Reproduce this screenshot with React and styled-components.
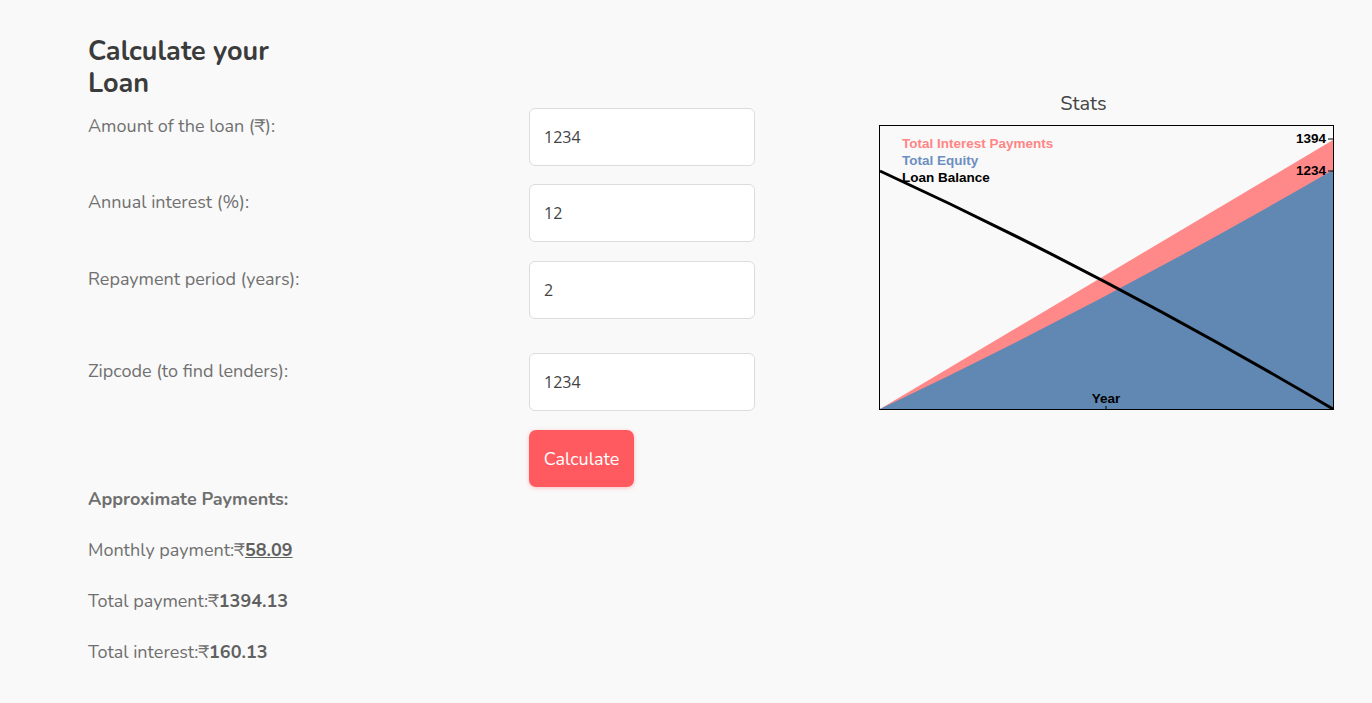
import styled, { createGlobalStyle } from "styled-components";

const GlobalStyle = createGlobalStyle`
  body {
    margin: 0;
    background: #f9f9f9;
    font-family: "Nunito", Lato, "Noto Sans", sans-serif;
  }
`;

const Page = styled.div`
  display: flex;
  align-items: flex-start;
  padding: 36px 0 0 88px;
  min-height: 667px;
`;

const Form = styled.div`
  width: 667px;
`;

const Heading = styled.h1`
  width: 220px;
  margin: 0 0 8px;
  font-size: 27px;
  line-height: 32px;
  font-weight: 700;
  color: #3b3b3b;
`;

const Row = styled.div`
  display: grid;
  grid-template-columns: 441px 226px;
  margin-bottom: ${(props) => props.gap || 0}px;
`;

const Label = styled.label`
  padding-top: 6px;
  font-size: 18px;
  line-height: 24px;
  color: #707070;
`;

const Input = styled.input`
  box-sizing: border-box;
  width: 226px;
  height: 58px;
  padding: 0 14px;
  border: 1px solid #dcdcdc;
  border-radius: 6px;
  background: #fff;
  font-family: "Open Sans", "Noto Sans", sans-serif;
  font-size: 16px;
  color: #444;
  outline: none;
`;

const Button = styled.button`
  display: block;
  width: 105px;
  height: 57px;
  border: none;
  border-radius: 7px;
  background: #ff5a5f;
  color: #fff;
  font-family: inherit;
  font-size: 18px;
  box-shadow: 0 1px 4px rgba(255, 90, 95, 0.35);
  cursor: pointer;
`;

const Results = styled.div`
  margin-top: 0;
  color: #6f6f6f;
  font-size: 18px;
  line-height: 24px;
`;

const ResultLine = styled.p`
  margin: 0 0 27px;
  font-weight: ${(props) => (props.bold ? 700 : 400)};
`;

const Value = styled.b`
  color: #606060;
  text-decoration: ${(props) => (props.underline ? "underline" : "none")};
`;

const ChartPanel = styled.div`
  margin: 55px 0 0 124px;
  width: 455px;
`;

const ChartTitle = styled.div`
  padding-right: 46px;
  text-align: center;
  font-size: 20px;
  line-height: 26px;
  color: #444;
  margin-bottom: 8px;
`;

const ChartSvg = styled.svg`
  display: block;
  font-family: "Liberation Sans", Arial, sans-serif;
  font-weight: 700;
  font-size: 13.5px;
`;

function Chart() {
  return (
    <ChartSvg width="455" height="285" viewBox="0 0 455 285">
      <polygon points="1,284 454,15 454,284" fill="#ff8888" />
      <path d="M1,284 Q230,175 454,45 L454,284 Z" fill="#6088b2" />
      <path
        d="M1,46 Q227,150 454,284"
        fill="none"
        stroke="#000"
        strokeWidth="3"
      />
      <text x="23" y="23" fill="#ff8585">Total Interest Payments</text>
      <text x="23" y="40" fill="#6c8fc0">Total Equity</text>
      <text x="23" y="57" fill="#000">Loan Balance</text>
      <text x="447" y="18" fill="#000" textAnchor="end">1394</text>
      <line x1="449" y1="14" x2="454" y2="14" stroke="#000" strokeWidth="1" />
      <text x="447" y="50" fill="#000" textAnchor="end">1234</text>
      <line x1="449" y1="46" x2="454" y2="46" stroke="#000" strokeWidth="1" />
      <text x="227" y="278" fill="#000" textAnchor="middle">Year</text>
      <line x1="227" y1="281" x2="227" y2="284" stroke="#000" strokeWidth="1" />
      <rect x="0.5" y="0.5" width="454" height="284" fill="none" stroke="#000" strokeWidth="1" />
    </ChartSvg>
  );
}

export default function App() {
  return (
    <>
      <GlobalStyle />
      <Page>
        <Form>
          <Heading>Calculate your Loan</Heading>
          <Row gap={18}>
            <Label>Amount of the loan (₹):</Label>
            <Input defaultValue="1234" />
          </Row>
          <Row gap={19}>
            <Label>Annual interest (%):</Label>
            <Input defaultValue="12" />
          </Row>
          <Row gap={34}>
            <Label>Repayment period (years):</Label>
            <Input defaultValue="2" />
          </Row>
          <Row gap={19}>
            <Label>Zipcode (to find lenders):</Label>
            <Input defaultValue="1234" />
          </Row>
          <Row>
            <div />
            <Button>Calculate</Button>
          </Row>
          <Results>
            <ResultLine bold>Approximate Payments:</ResultLine>
            <ResultLine>
              Monthly payment:₹<Value underline>58.09</Value>
            </ResultLine>
            <ResultLine>
              Total payment:₹<Value>1394.13</Value>
            </ResultLine>
            <ResultLine>
              Total interest:₹<Value>160.13</Value>
            </ResultLine>
          </Results>
        </Form>
        <ChartPanel>
          <ChartTitle>Stats</ChartTitle>
          <Chart />
        </ChartPanel>
      </Page>
    </>
  );
}
